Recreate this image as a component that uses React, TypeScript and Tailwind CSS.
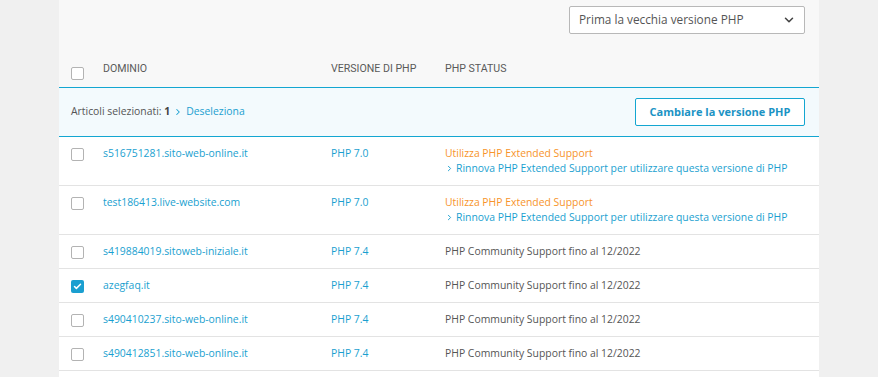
import { ChevronDown, ChevronRight, Check } from "lucide-react";

type Row = {
  domain: string;
  version: string;
  extended?: boolean;
  checked?: boolean;
};

const ROWS: Row[] = [
  { domain: "s516751281.sito-web-online.it", version: "PHP 7.0", extended: true },
  { domain: "test186413.live-website.com", version: "PHP 7.0", extended: true },
  { domain: "s419884019.sitoweb-iniziale.it", version: "PHP 7.4" },
  { domain: "azegfaq.it", version: "PHP 7.4", checked: true },
  { domain: "s490410237.sito-web-online.it", version: "PHP 7.4" },
  { domain: "s490412851.sito-web-online.it", version: "PHP 7.4" },
];

function Box({ checked }: { checked?: boolean }) {
  return checked ? (
    <span className="grid size-[13px] shrink-0 place-items-center rounded-[2px] bg-[#1a9fd0] text-white">
      <Check className="size-[9px]" strokeWidth={4} />
    </span>
  ) : (
    <span className="block size-[13px] shrink-0 rounded-[2px] border border-[#b3b3b3] bg-white" />
  );
}

export default function App() {
  return (
    <div
      className="flex h-[377px] w-full overflow-hidden bg-[#f0f0f0] pl-[59px] text-[10.4px] text-[#555]"
      style={{ fontFamily: '"Open Sans", sans-serif' }}
    >
      <div className="w-[760px] shrink-0 bg-white">
        <div className="bg-[#f8f8f8]">
          <div className="flex justify-end pt-[6px] pr-[14px]">
            <div className="flex h-[28px] w-[236px] items-center justify-between rounded-[2px] border border-[#b8b8b8] bg-white pl-[9px] pr-[8px] text-[11.8px] text-[#555]">
              <span>Prima la vecchia versione PHP</span>
              <ChevronDown className="size-[14px] text-[#444]" strokeWidth={2.6} />
            </div>
          </div>
          <div
            className="flex h-[53px] items-start pt-[27px] text-[10.6px] text-[#5a5a5a]"
            style={{ fontFamily: "Roboto, sans-serif" }}
          >
            <div className="mt-[6px] w-[44px] pl-[12px]">
              <Box />
            </div>
            <div className="w-[228px]">DOMINIO</div>
            <div className="w-[114px]">VERSIONE DI PHP</div>
            <div>PHP STATUS</div>
          </div>
        </div>

        <div className="flex h-[50px] items-center justify-between border-y border-[#13a6d1] bg-[#f3fafd] pl-[12px] pr-[14px]">
          <div className="flex items-center">
            <span>
              Articoli selezionati: <b className="font-bold text-[#444]">1</b>
            </span>
            <ChevronRight className="ml-[3px] size-[10px] text-[#1a9fd0]" strokeWidth={2.5} />
            <span className="ml-[3px] text-[#1a9fd0]">Deseleziona</span>
          </div>
          <div className="flex h-[28px] w-[170px] items-center justify-center rounded-[2px] border border-[#13a6d1] bg-white text-[11px] font-bold text-[#1b93c4]">
            Cambiare la versione PHP
          </div>
        </div>

        {ROWS.map((r) => (
          <div
            key={r.domain}
            className="flex items-start border-b border-[#e3e3e3] py-[9px] leading-[15px]"
          >
            <div className="mt-[2px] w-[44px] pl-[12px]">
              <Box checked={r.checked} />
            </div>
            <div className="w-[228px] text-[#1a9fd0]">{r.domain}</div>
            <div className="w-[114px] text-[#1a9fd0]">{r.version}</div>
            <div>
              {r.extended ? (
                <>
                  <div className="text-[#f7942a]">Utilizza PHP Extended Support</div>
                  <div className="flex items-center text-[#1a9fd0]">
                    <ChevronRight className="size-[9px]" strokeWidth={2.5} />
                    <span className="ml-[2px]">
                      Rinnova PHP Extended Support per utilizzare questa versione di PHP
                    </span>
                  </div>
                </>
              ) : (
                <span>PHP Community Support fino al 12/2022</span>
              )}
            </div>
          </div>
        ))}
      </div>
    </div>
  );
}
